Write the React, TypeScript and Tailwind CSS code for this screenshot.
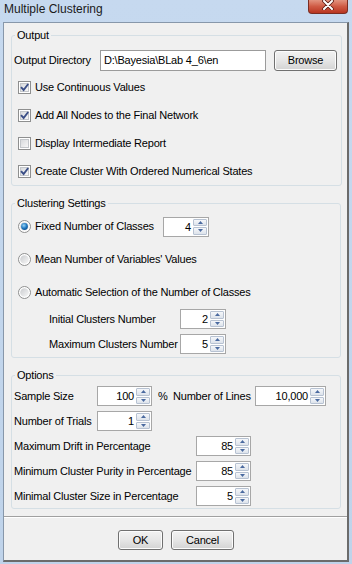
import type { ReactNode } from "react";

const FONT = "font-['Liberation_Sans',Arial,sans-serif]";

function CheckBox({ checked, label }: { checked?: boolean; label: string }) {
  return (
    <div className="flex h-[28px] items-center pl-[6px]">
      <span className="flex h-[13px] w-[13px] items-center justify-center border border-[#8e8f8f] bg-white">
        <span className="flex h-[9px] w-[9px] items-center justify-center border border-[#c3c6ca] bg-gradient-to-br from-[#d8dadd] to-[#f7f7f7]">
          {checked && (
            <svg width="9" height="9" viewBox="0 0 9 9" className="overflow-visible">
              <path d="M1 4.2 L3.6 7 L8.2 1" fill="none" stroke="#3b4f87" strokeWidth="1.9" />
            </svg>
          )}
        </span>
      </span>
      <span className="ml-[4px] whitespace-nowrap">{label}</span>
    </div>
  );
}

function Radio({ checked }: { checked?: boolean }) {
  return (
    <svg width="13" height="13" viewBox="0 0 13 13" className="shrink-0">
      <defs>
        <linearGradient id="rb" x1="0" y1="0" x2="1" y2="1">
          <stop offset="0" stopColor="#c9cbce" />
          <stop offset="1" stopColor="#f8f8f8" />
        </linearGradient>
        <radialGradient id="rd" cx="0.4" cy="0.35" r="0.7">
          <stop offset="0" stopColor="#9ad4f6" />
          <stop offset="0.6" stopColor="#1f78c1" />
          <stop offset="1" stopColor="#0e4e8c" />
        </radialGradient>
      </defs>
      <circle cx="6.5" cy="6.5" r="6" fill="#fff" stroke="#8e8f8f" />
      <circle cx="6.5" cy="6.5" r="4.3" fill="url(#rb)" />
      {checked && <circle cx="6.5" cy="6.5" r="3.4" fill="url(#rd)" />}
    </svg>
  );
}

function SpinBtn({ up }: { up?: boolean }) {
  return (
    <span className="flex flex-1 items-center justify-center rounded-[1px] border border-[#b7c2d2] bg-gradient-to-b from-[#f5f7fa] to-[#dde3eb]">
      <svg width="5" height="3" viewBox="0 0 5 3">
        <path d={up ? "M0 3 L2.5 0 L5 3 Z" : "M0 0 L2.5 3 L5 0 Z"} fill="#4a6aa0" />
      </svg>
    </span>
  );
}

function Spinner({ value, className }: { value: string; className: string }) {
  return (
    <div className={`flex h-[20px] shrink-0 border border-[#a7a7a7] bg-white ${className}`}>
      <div className="flex-1 pr-[2px] text-right leading-[18px]">{value}</div>
      <div className="flex w-[15px] flex-col gap-[1px] py-[1px] pr-[1px]">
        <SpinBtn up />
        <SpinBtn />
      </div>
    </div>
  );
}

function Label({ children, className }: { children: ReactNode; className: string }) {
  return <span className={`shrink-0 whitespace-nowrap ${className}`}>{children}</span>;
}

function Group({ title, className, children }: { title: string; className: string; children: ReactNode }) {
  return (
    <fieldset className={`rounded-[3px] border border-[#d5dfe5] ${className}`}>
      <legend className="ml-[3px] px-[2px] leading-[13px]">{title}</legend>
      {children}
    </fieldset>
  );
}

function WinButton({ children, className }: { children: ReactNode; className: string }) {
  return (
    <div
      className={`flex items-center justify-center rounded-[3px] border border-[#707070] bg-gradient-to-b from-[#f2f2f2] via-[#e6e6e6] to-[#d3d3d3] shadow-[inset_0_0_0_1px_#fcfcfc] ${className}`}
    >
      {children}
    </div>
  );
}

export default function App() {
  return (
    <div className={`flex h-[564px] w-[352px] flex-col bg-gradient-to-b from-[#c6d9ef] to-[#bfd3ea] pb-[2px] pl-[3px] pr-[3px] text-[11px] tracking-[-0.2px] text-black ${FONT}`}>
      <div className="flex h-[22px] shrink-0 items-start justify-between">
        <span className="mt-[2px] pl-[1px] text-[12px] leading-[15px] tracking-normal text-[#1a1a1a]">Multiple Clustering</span>
        <div className="mr-[1px] flex h-[14px] w-[40px] items-center justify-center rounded-b-[4px] border border-t-0 border-[#7a2d22] bg-gradient-to-b from-[#e2937f] via-[#cf5a44] to-[#b8341f]">
          <svg width="12" height="10" viewBox="0 0 12 10" className="-mt-[3px]">
            <path d="M2 1 L10 9 M10 1 L2 9" stroke="#5a1a12" strokeWidth="3.6" strokeLinecap="round" />
            <path d="M2 1 L10 9 M10 1 L2 9" stroke="#ffffff" strokeWidth="2" strokeLinecap="round" />
          </svg>
        </div>
      </div>

      <div className="flex flex-1 flex-col border border-b-2 border-r-2 border-[#8797aa] border-b-[#6b6b6b] border-r-[#6b6b6b] bg-[#f0f0f0] pl-[7px] pr-[6px]">
        <Group title="Output" className="mt-[6px]">
          <div className="mt-[7px] flex h-[22px] items-center pl-[2px] pr-[4px]">
            <Label className="w-[86px]">Output Directory</Label>
            <div className="flex h-[21px] w-[166px] shrink-0 items-center whitespace-nowrap border border-[#9b9b9b] bg-white pl-[3px]">
              D:\Bayesia\BLab 4_6\en
            </div>
            <WinButton className="ml-[8px] h-[21px] w-[63px]">Browse</WinButton>
          </div>
          <div className="mt-[2px]">
            <CheckBox checked label="Use Continuous Values" />
            <CheckBox checked label="Add All Nodes to the Final Network" />
            <CheckBox label="Display Intermediate Report" />
            <CheckBox checked label="Create Cluster With Ordered Numerical States" />
          </div>
        </Group>

        <Group title="Clustering Settings" className="mt-[11px] pb-[3px]">
          <div className="flex h-[33px] items-center pl-[6px]">
            <Radio checked />
            <Label className="ml-[4px] w-[128px]">Fixed Number of Classes</Label>
            <Spinner value="4" className="w-[46px]" />
          </div>
          <div className="flex h-[33px] items-center pl-[6px]">
            <Radio />
            <Label className="ml-[4px]">Mean Number of Variables&apos; Values</Label>
          </div>
          <div className="flex h-[33px] items-center pl-[6px]">
            <Radio />
            <Label className="ml-[4px]">Automatic Selection of the Number of Classes</Label>
          </div>
          <div className="flex flex-col gap-[5px] pl-[37px]">
            <div className="flex h-[20px] items-center">
              <Label className="w-[131px]">Initial Clusters Number</Label>
              <Spinner value="2" className="w-[46px]" />
            </div>
            <div className="flex h-[20px] items-center">
              <Label className="w-[131px]">Maximum Clusters Number</Label>
              <Spinner value="5" className="w-[46px]" />
            </div>
          </div>
        </Group>

        <Group title="Options" className="mt-[11px] pb-[2px]">
          <div className="mt-[4px] flex flex-col gap-[5px] pl-[2px]">
            <div className="flex h-[20px] items-center">
              <Label className="w-[83px]">Sample Size</Label>
              <Spinner value="100" className="w-[55px]" />
              <Label className="ml-[6px] w-[15px]">%</Label>
              <Label className="w-[82px]">Number of Lines</Label>
              <Spinner value="10,000" className="w-[71px]" />
            </div>
            <div className="flex h-[20px] items-center">
              <Label className="w-[83px]">Number of Trials</Label>
              <Spinner value="1" className="w-[55px]" />
            </div>
            <div className="flex h-[20px] items-center">
              <Label className="w-[182px]">Maximum Drift in Percentage</Label>
              <Spinner value="85" className="w-[55px]" />
            </div>
            <div className="flex h-[20px] items-center">
              <Label className="w-[182px]">Minimum Cluster Purity in Percentage</Label>
              <Spinner value="85" className="w-[55px]" />
            </div>
            <div className="flex h-[20px] items-center">
              <Label className="w-[182px]">Minimal Cluster Size in Percentage</Label>
              <Spinner value="5" className="w-[55px]" />
            </div>
          </div>
        </Group>

        <div className="-ml-[7px] -mr-[6px] mt-[7px] h-[2px] border-t border-b border-t-[#a0a0a0] border-b-white" />

        <div className="mt-[12px] flex justify-center gap-[8px]">
          <WinButton className="h-[20px] w-[45px]">OK</WinButton>
          <WinButton className="h-[20px] w-[63px]">Cancel</WinButton>
        </div>
      </div>
    </div>
  );
}
